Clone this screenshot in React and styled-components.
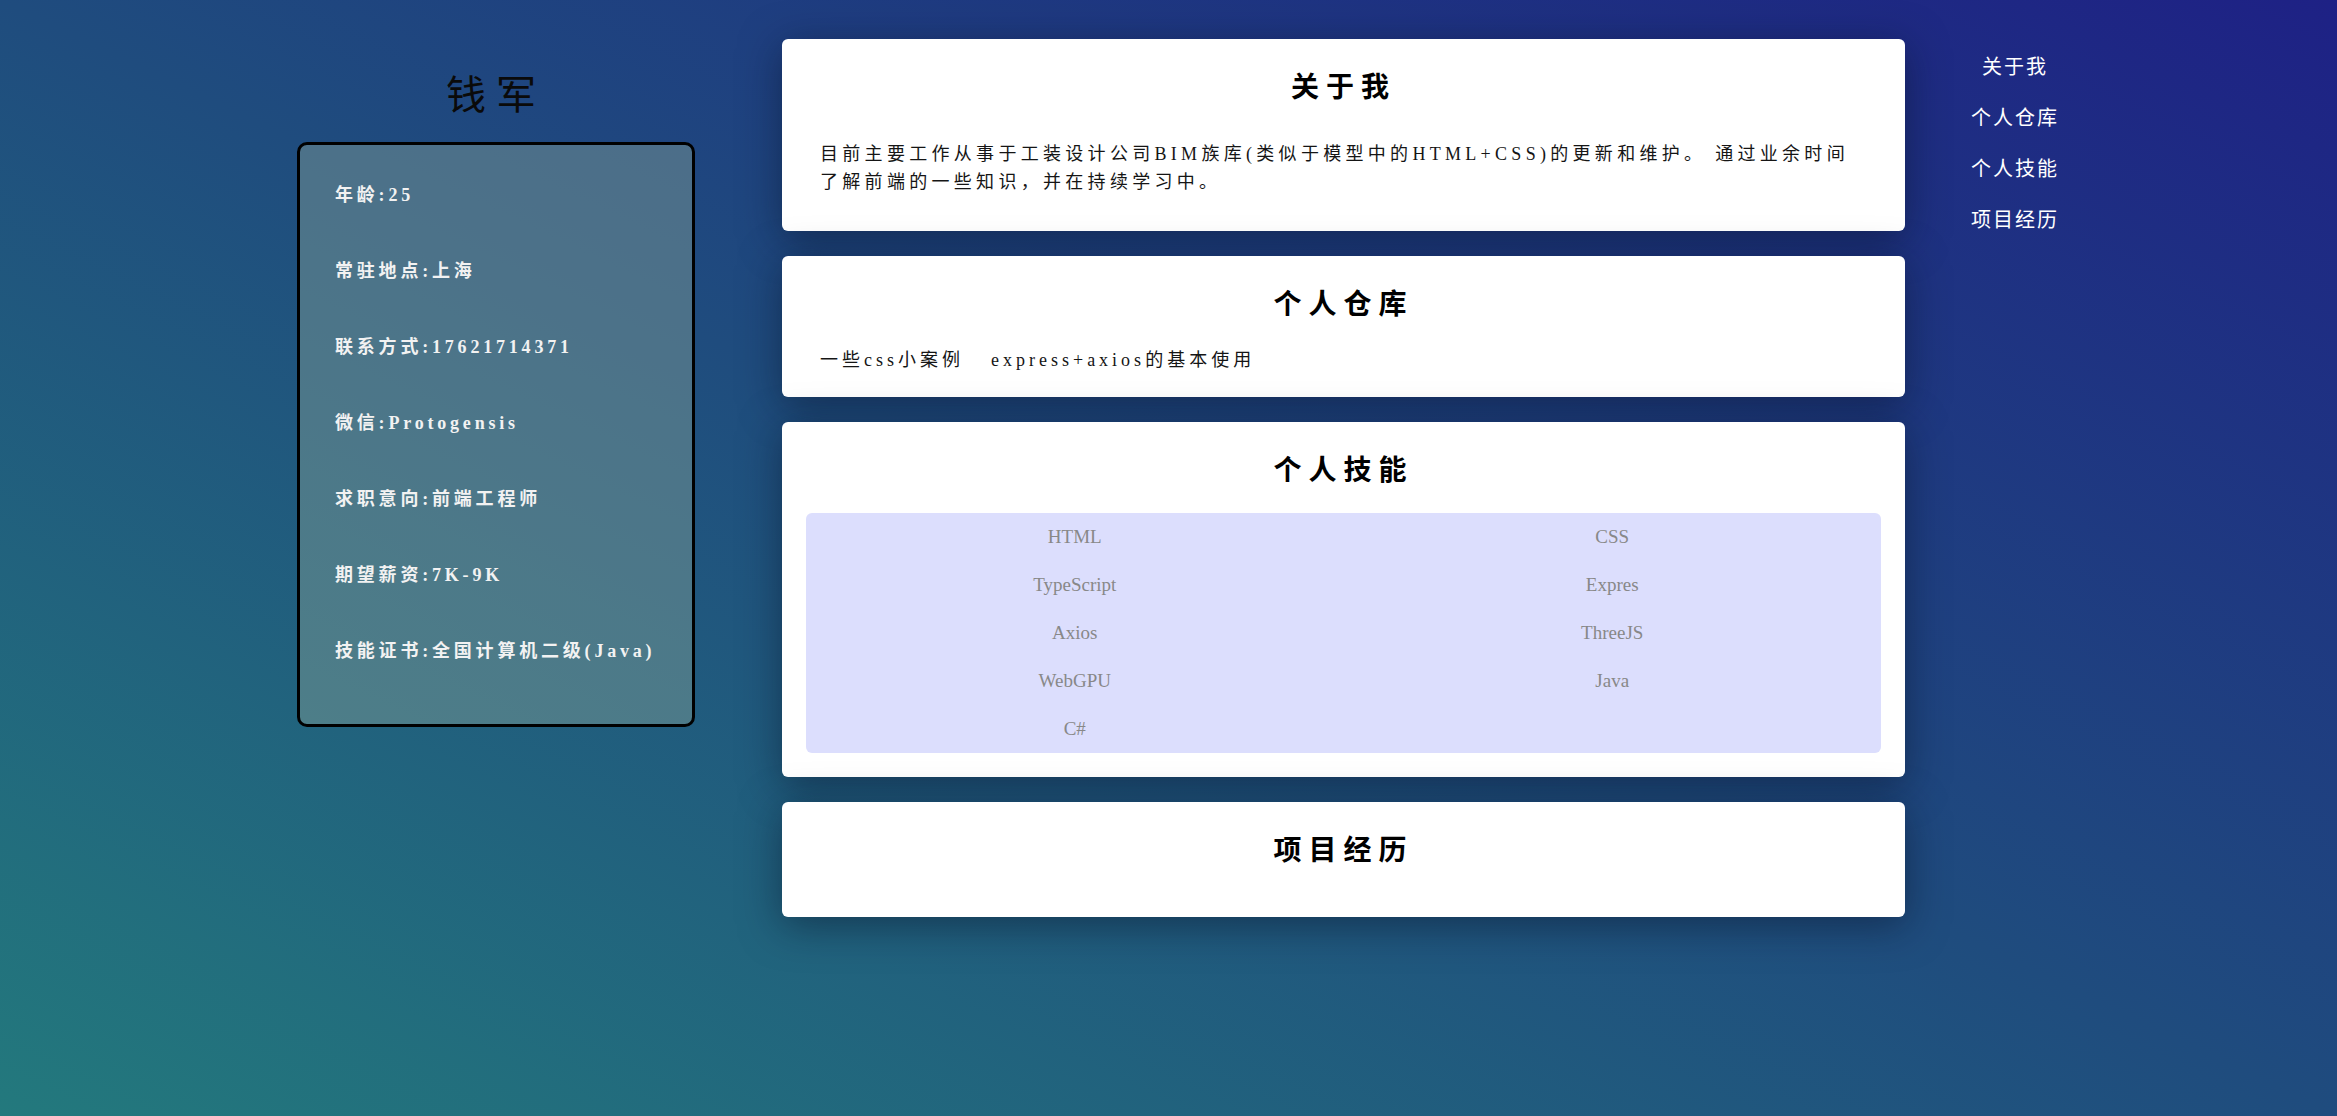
import React from 'react';
import styled, { createGlobalStyle } from 'styled-components';

// Resume data
const profile = {
  name: '钱军',
  info: [
    '年龄:25',
    '常驻地点:上海',
    '联系方式:17621714371',
    '微信:Protogensis',
    '求职意向:前端工程师',
    '期望薪资:7K-9K',
    '技能证书:全国计算机二级(Java)'
  ]
};

const repos = ['一些css小案例', 'express+axios的基本使用'];

const skills = ['HTML', 'CSS', 'TypeScript', 'Expres', 'Axios', 'ThreeJS', 'WebGPU', 'Java', 'C#'];

const navItems = ['关于我', '个人仓库', '个人技能', '项目经历'];

const GlobalStyle = createGlobalStyle`
  html, body {
    margin: 0;
    padding: 0;
  }

  body {
    font-family: "Liberation Serif", "Noto Sans CJK SC", serif;
  }
`;

const Page = styled.div`
  min-height: 100vh;
  box-sizing: border-box;
  display: flex;
  align-items: flex-start;
  padding: 39px 0 40px 297px;
  background: linear-gradient(to top right, #23797d 0%, #1f4c7e 50%, #1e2185 100%);
`;

const Aside = styled.aside`
  width: 398px;
  flex-shrink: 0;
  display: flex;
  flex-direction: column;
  align-items: center;
`;

const Name = styled.h1`
  margin: 28px 0 25px;
  font-family: "Noto Sans CJK SC", sans-serif;
  font-weight: 400;
  font-size: 40px;
  line-height: 50px;
  letter-spacing: 10px;
  color: #0a0a0a;
`;

const InfoBox = styled.ul`
  width: 100%;
  box-sizing: border-box;
  margin: 0;
  padding: 12px 0 35px 35px;
  list-style: none;
  border: 3px solid #000;
  border-radius: 10px;
  background: rgba(130, 160, 150, 0.45);
`;

const InfoRow = styled.li`
  line-height: 76px;
  font-size: 18px;
  font-weight: 700;
  letter-spacing: 3.8px;
  color: #f2f2f2;
`;

const Main = styled.main`
  width: 1123px;
  flex-shrink: 0;
  margin-left: 87px;
  display: flex;
  flex-direction: column;
  gap: 25px;
`;

const Card = styled.section`
  background: #fff;
  border-radius: 6px;
  padding: 20px 24px 24px;
  box-shadow: 0 8px 40px rgba(8, 18, 40, 0.5);
`;

const CardTitle = styled.h2`
  margin: 6px 0 25px;
  text-align: center;
  font-family: "Noto Sans CJK SC", sans-serif;
  font-weight: 700;
  font-size: 28px;
  line-height: 40px;
  letter-spacing: 7px;
  color: #000;
`;

const AboutText = styled.p`
  margin: 35px 0 11px;
  padding: 0 20px 0 14px;
  font-size: 18px;
  line-height: 28px;
  letter-spacing: 4.3px;
  color: #151515;
`;

const RepoList = styled.div`
  padding: 0 14px;
  font-size: 18px;
  line-height: 26px;
  letter-spacing: 4px;
`;

const RepoLink = styled.a`
  margin-right: 27px;
  color: #151515;
  text-decoration: none;
`;

const SkillGrid = styled.div`
  display: grid;
  grid-template-columns: 1fr 1fr;
  grid-auto-rows: 48px;
  background: #dcdefd;
  border-radius: 6px;
`;

const SkillItem = styled.div`
  display: flex;
  align-items: center;
  justify-content: center;
  font-size: 19px;
  color: #888;
`;

const Nav = styled.nav`
  width: 120px;
  margin-left: 50px;
  padding-top: 1px;
  display: flex;
  flex-direction: column;
  align-items: center;
`;

const NavItem = styled.a`
  line-height: 51px;
  font-family: "Noto Sans CJK SC", sans-serif;
  font-size: 20px;
  letter-spacing: 2px;
  color: #fff;
  text-decoration: none;
`;

const App = () => {
  return (
    <>
      <GlobalStyle />
      <Page>
        <Aside>
          <Name>{profile.name}</Name>
          <InfoBox>
            {profile.info.map((line) => (
              <InfoRow key={line}>{line}</InfoRow>
            ))}
          </InfoBox>
        </Aside>

        <Main>
          <Card>
            <CardTitle>关于我</CardTitle>
            <AboutText>
              目前主要工作从事于工装设计公司BIM族库(类似于模型中的HTML+CSS)的更新和维护。 通过业余时间了解前端的一些知识，并在持续学习中。
            </AboutText>
          </Card>

          <Card>
            <CardTitle>个人仓库</CardTitle>
            <RepoList>
              {repos.map((repo) => (
                <RepoLink key={repo} href="#">{repo}</RepoLink>
              ))}
            </RepoList>
          </Card>

          <Card>
            <CardTitle>个人技能</CardTitle>
            <SkillGrid>
              {skills.map((skill) => (
                <SkillItem key={skill}>{skill}</SkillItem>
              ))}
            </SkillGrid>
          </Card>

          <Card>
            <CardTitle>项目经历</CardTitle>
          </Card>
        </Main>

        <Nav>
          {navItems.map((item) => (
            <NavItem key={item} href="#">{item}</NavItem>
          ))}
        </Nav>
      </Page>
    </>
  );
};

export default App;
